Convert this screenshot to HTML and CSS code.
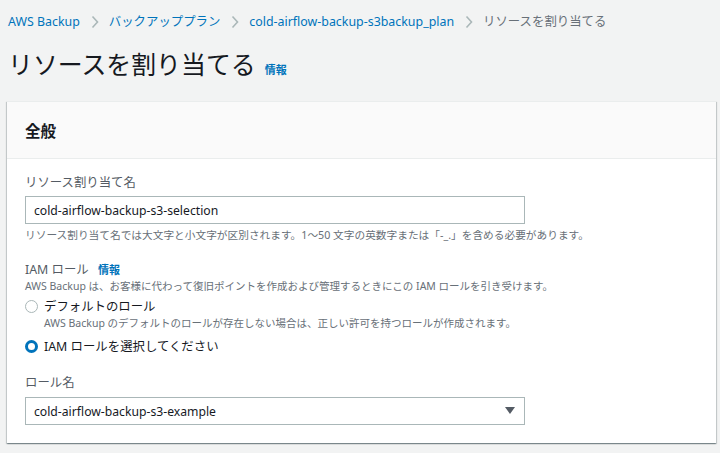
FILE: index.html
```html
<!DOCTYPE html>
<html lang="ja">
<head>
<meta charset="utf-8">
<title>リソースを割り当てる</title>
<link rel="stylesheet" href="styles.css">
</head>
<body>
<div class="page">
  <nav class="crumbs">
    <a class="crumb-link">AWS Backup</a>
    <svg class="chev" viewBox="0 0 8 14" width="8" height="14"><path d="M1.5 1.5 L6.5 7 L1.5 12.5" fill="none" stroke="#aab7b8" stroke-width="1.6"/></svg>
    <a class="crumb-link">バックアッププラン</a>
    <svg class="chev" viewBox="0 0 8 14" width="8" height="14"><path d="M1.5 1.5 L6.5 7 L1.5 12.5" fill="none" stroke="#aab7b8" stroke-width="1.6"/></svg>
    <a class="crumb-link">cold-airflow-backup-s3backup_plan</a>
    <svg class="chev" viewBox="0 0 8 14" width="8" height="14"><path d="M1.5 1.5 L6.5 7 L1.5 12.5" fill="none" stroke="#aab7b8" stroke-width="1.6"/></svg>
    <span class="crumb-current">リソースを割り当てる</span>
  </nav>

  <div class="title-row">
    <h1 class="title">リソースを割り当てる</h1>
    <a class="info-link">情報</a>
  </div>

  <section class="card">
    <header class="card-header">
      <h2 class="card-title">全般</h2>
    </header>
    <div class="card-body">
      <div class="field">
        <label class="label">リソース割り当て名</label>
        <div class="input">cold-airflow-backup-s3-selection</div>
        <div class="hint">リソース割り当て名では大文字と小文字が区別されます。1～50 文字の英数字または「-_.」を含める必要があります。</div>
      </div>

      <div class="field field-iam">
        <div class="label">IAM ロール <a class="info-inline">情報</a></div>
        <div class="desc">AWS Backup は、お客様に代わって復旧ポイントを作成および管理するときにこの IAM ロールを引き受けます。</div>
        <div class="radio-row">
          <span class="radio"></span>
          <span class="radio-text">デフォルトのロール</span>
        </div>
        <div class="radio-sub">AWS Backup のデフォルトのロールが存在しない場合は、正しい許可を持つロールが作成されます。</div>
        <div class="radio-row radio-row-2">
          <span class="radio radio-on"></span>
          <span class="radio-text">IAM ロールを選択してください</span>
        </div>
      </div>

      <div class="field field-role">
        <label class="label">ロール名</label>
        <div class="input select">
          <span>cold-airflow-backup-s3-example</span>
          <svg class="caret" viewBox="0 0 10 8" width="10" height="8"><path d="M0 0 H10 L5 7 Z" fill="#545b64"/></svg>
        </div>
      </div>
    </div>
  </section>
</div>
</body>
</html>
```

FILE: styles.css
```css
* { box-sizing: border-box; }
html, body { margin: 0; padding: 0; }
body {
  background: #f2f3f3;
  font-family: "Noto Sans", "Noto Sans CJK JP", sans-serif;
  color: #16191f;
  width: 720px;
  height: 453px;
  overflow: hidden;
}
.page {
  padding: 12px 4px 0 7px;
}
.crumbs {
  display: flex;
  align-items: center;
  height: 20px;
  padding-left: 1px;
  font-size: 12.4px;
  line-height: 20px;
}
.crumb-link { color: #0073bb; }
.crumb-current { color: #687078; }
.chev { margin: 0 10px 0 11px; }
.title-row {
  display: flex;
  align-items: baseline;
  margin-top: 15px;
  height: 34px;
  padding-left: 1px;
}
.title {
  margin: 0;
  font-size: 24.9px;
  line-height: 34px;
  font-weight: 400;
  color: #16191f;
}
.info-link {
  margin-left: 9px;
  font-size: 11px;
  font-weight: 700;
  color: #0073bb;
}
.card {
  margin-top: 20px;
  width: 709px;
  background: #fff;
  box-shadow: 0 1px 1px 0 rgba(0,28,36,.3), 1px 1px 1px 0 rgba(0,28,36,.15), -1px 1px 1px 0 rgba(0,28,36,.15);
  border-top: 1px solid #eaeded;
}
.card-header {
  height: 57px;
  background: #fafafa;
  border-bottom: 1px solid #eaeded;
  display: flex;
  align-items: center;
  padding-left: 18px;
}
.card-title {
  margin: 0;
  font-size: 15.5px;
  font-weight: 700;
  color: #16191f;
}
.card-body {
  padding: 15px 18px 18px;
}
.field { display: flex; flex-direction: column; }
.label {
  font-size: 12.4px;
  line-height: 18px;
  color: #545b64;
}
.input {
  margin-top: 4px;
  width: 500px;
  height: 28px;
  border: 1px solid #aab7b8;
  background: #fff;
  padding: 0 8px;
  display: flex;
  align-items: center;
  font-size: 12.2px;
  color: #16191f;
}
.hint {
  margin-top: 3px;
  font-size: 10.7px;
  line-height: 16px;
  color: #687078;
}
.field-iam { margin-top: 18px; }
.desc {
  font-size: 10.5px;
  line-height: 15px;
  color: #687078;
}
.info-inline {
  margin-left: 6px;
  font-size: 11px;
  font-weight: 700;
  color: #0073bb;
}
.radio-row {
  margin-top: 2px;
  display: flex;
  align-items: center;
  height: 20px;
}
.radio-row-2 { margin-top: 6px; }
.radio {
  width: 13px;
  height: 13px;
  border-radius: 50%;
  border: 1.5px solid #aab7b8;
  background: #fff;
  margin-right: 6px;
  flex: none;
}
.radio-on { border: 3.5px solid #0073bb; }
.radio-text {
  font-size: 12.4px;
  color: #16191f;
}
.radio-sub {
  padding-left: 19px;
  font-size: 10.5px;
  line-height: 14px;
  color: #687078;
}
.field-role { margin-top: 18px; }
.select {
  margin-top: 5px;
  justify-content: space-between;
}
.caret { margin-right: 1px; }
```
